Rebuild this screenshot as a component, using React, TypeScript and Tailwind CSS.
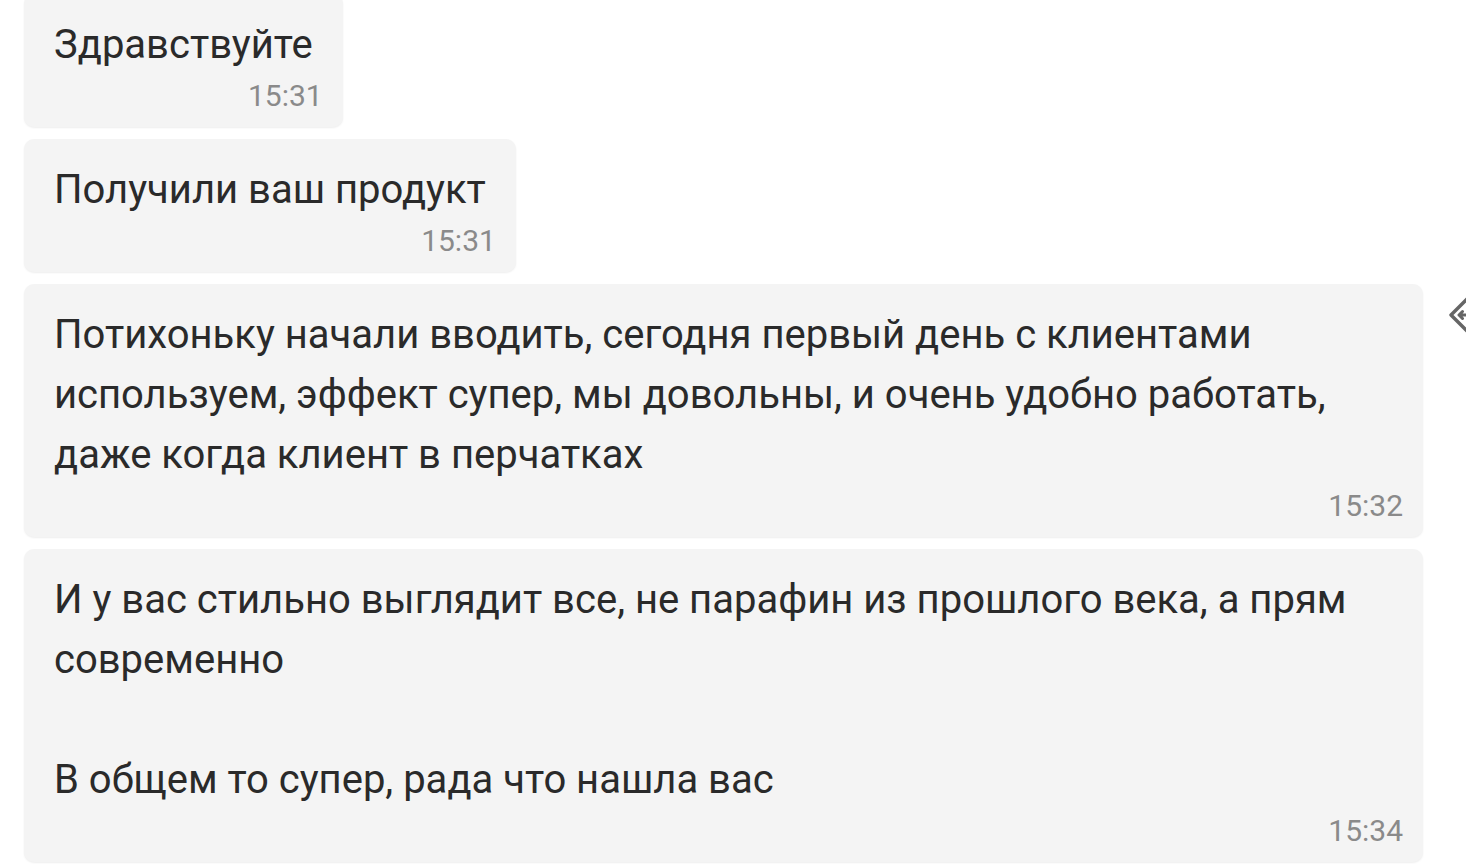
import React from "react";

const Bubble = ({ children, time, full }: { children: React.ReactNode; time: string; full?: boolean }) => (
  <div
    className={`${full ? "w-full" : ""} bg-[#f4f4f4] rounded-[10px] shadow-[0_1px_2px_rgba(0,0,0,0.07)] pl-[30px] pr-[20px] pt-[21px] pb-[16px] flex flex-col`}
  >
    <div className="pr-[10px] text-[40px] leading-[60px] text-[#2a2a2a] whitespace-pre-line">{children}</div>
    <div className="self-end mt-[6px] text-[30px] leading-[30px] text-[#8a8a8a]">{time}</div>
  </div>
);

export default function App() {
  return (
    <div
      className="relative w-[1466px] h-[864px] overflow-hidden bg-white"
      style={{ fontFamily: "Roboto, 'Noto Sans', sans-serif" }}
    >
      <div className="mt-[-6px] pl-[24px] pr-[43px] flex flex-col items-start gap-[12px]">
        <Bubble time="15:31">Здравствуйте</Bubble>
        <Bubble time="15:31">Получили ваш продукт</Bubble>
        <Bubble time="15:32" full>
          Потихоньку начали вводить, сегодня первый день с клиентами используем, эффект супер, мы довольны, и очень удобно работать, даже когда клиент в перчатках
        </Bubble>
        <Bubble time="15:34" full>
          {"И у вас стильно выглядит все, не парафин из прошлого века, а прям современно\n\nВ общем то супер, рада что нашла вас"}
        </Bubble>
      </div>
      <svg
        className="absolute left-[1449px] top-[297px]"
        width="36"
        height="36"
        viewBox="0 0 36 36"
        fill="none"
      >
        <path d="M18 2 L34 18 L18 34 L2 18 Z" stroke="#666666" strokeWidth="3.4" strokeLinejoin="round" />
        <path d="M10 18 H24 M13.5 14.5 L10 18 L13.5 21.5" stroke="#666666" strokeWidth="3" strokeLinecap="round" strokeLinejoin="round" />
      </svg>
    </div>
  );
}
